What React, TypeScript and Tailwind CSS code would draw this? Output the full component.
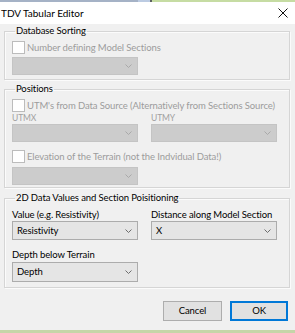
import * as React from "react";
import clsx from "clsx";

// Disabled/enabled WinForms-style dropdown
function Combo({ value, disabled, className }: { value?: string; disabled?: boolean; className?: string }) {
  return (
    <div
      className={clsx(
        "flex items-center justify-between border pl-[4px] pr-[5px]",
        disabled ? "bg-[#cccccc] border-[#c4c4c4]" : "bg-[#e5e5e5] border-[#acacac] text-black",
        className,
      )}
    >
      <span className="leading-none">{value}</span>
      <svg width="7" height="4" viewBox="0 0 7 4" className="shrink-0">
        <polyline points="0.5,0.5 3.5,3.5 6.5,0.5" fill="none" stroke={disabled ? "#a9a9a9" : "#6d6d6d"} strokeWidth="1" />
      </svg>
    </div>
  );
}

function Check({ label }: { label: string }) {
  return (
    <div className="flex items-center gap-[2px] h-[13px]">
      <span className="w-[13px] h-[13px] bg-white border border-[#bcbcbc] shrink-0" />
      <span className="text-[#9c9c9c] leading-none whitespace-nowrap">{label}</span>
    </div>
  );
}

function Group({ title, className, children }: { title: string; className?: string; children: React.ReactNode }) {
  return (
    <fieldset
      className={clsx(
        "ml-[4px] mr-[5px] border border-[#d5d5d5] pl-[7px] shadow-[inset_1px_1px_0_#fbfbfb,1px_1px_0_#fbfbfb]",
        className,
      )}
    >
      <legend className="ml-[3px] px-[1px] leading-[14px] text-black">{title}</legend>
      {children}
    </fieldset>
  );
}

export default function App() {
  return (
    <div
      className="w-[295px] h-[333px] flex flex-col overflow-hidden text-[9.5px] tracking-[-0.1px] text-black"
      style={{ fontFamily: '"Segoe UI", Lato, sans-serif' }}
    >
      {/* window edge strip */}
      <div className="h-[2px] flex shrink-0">
        <div className="w-[138px] bg-[#a5b2c6]" />
        <div className="w-[12px] bg-[#bccbe2]" />
        <div className="w-[2px] bg-[#5c5f62]" />
        <div className="flex-1 bg-[#c6dca3]" />
      </div>

      {/* title bar */}
      <div className="h-[22px] bg-white flex items-center justify-between pl-[1px] pr-[7px] shrink-0">
        <span className="text-[10px] tracking-normal">TDV Tabular Editor</span>
        <svg width="10" height="10" viewBox="0 0 10 10">
          <path d="M0.5 0.5 L9.5 9.5 M9.5 0.5 L0.5 9.5" stroke="#111" strokeWidth="1" />
        </svg>
      </div>

      {/* body */}
      <div className="flex-1 bg-[#f0f0f0] flex flex-col">
        <Group title="Database Sorting" className="pb-[4px]">
          <div className="mt-[3px]">
            <Check label="Number defining Model Sections" />
          </div>
          <Combo disabled className="mt-[3px] w-[126px] h-[18px]" />
        </Group>

        <Group title="Positions" className="mt-[2px] pb-[2px]">
          <div className="mt-[3px]">
            <Check label="UTM's from Data Source (Alternatively from Sections Source)" />
          </div>
          <div className="mt-[1px] flex gap-[13px]">
            <div className="w-[126px] flex flex-col">
              <span className="text-[8.5px] leading-[10px] text-[#a0a0a0]">UTMX</span>
              <Combo disabled className="mt-[1px] h-[18px]" />
            </div>
            <div className="w-[126px] flex flex-col">
              <span className="text-[8.5px] leading-[10px] text-[#a0a0a0]">UTMY</span>
              <Combo disabled className="mt-[1px] h-[18px]" />
            </div>
          </div>
          <div className="mt-[8px]">
            <Check label="Elevation of the Terrain (not the Indvidual Data!)" />
          </div>
          <Combo disabled className="mt-[4px] w-[126px] h-[18px]" />
        </Group>

        <Group title="2D Data Values and Section Poisitioning" className="mt-[3px] pb-[5px]">
          <div className="mt-[4px] flex gap-[13px]">
            <div className="w-[126px] flex flex-col">
              <span className="leading-[12px]">Value (e.g. Resistivity)</span>
              <Combo value="Resistivity" className="h-[19px]" />
            </div>
            <div className="w-[126px] flex flex-col">
              <span className="leading-[12px] whitespace-nowrap">Distance along Model Section</span>
              <Combo value="X" className="h-[19px]" />
            </div>
          </div>
          <div className="mt-[9px] w-[126px] flex flex-col">
            <span className="leading-[12px]">Depth below Terrain</span>
            <Combo value="Depth" className="mt-[1px] h-[20px]" />
          </div>
        </Group>

        <div className="mt-[13px] flex justify-end gap-[8px] mr-[7px]">
          <button className="w-[59px] h-[20px] bg-[#e1e1e1] border border-[#adadad] leading-none">Cancel</button>
          <button className="w-[58px] h-[20px] bg-[#e1e1e1] border border-[#0078d7] shadow-[inset_0_0_0_1px_#0078d7] leading-none">
            OK
          </button>
        </div>
      </div>

      {/* bottom edge strip */}
      <div className="h-[3px] bg-[#c5d5a8] shrink-0" />
    </div>
  );
}
